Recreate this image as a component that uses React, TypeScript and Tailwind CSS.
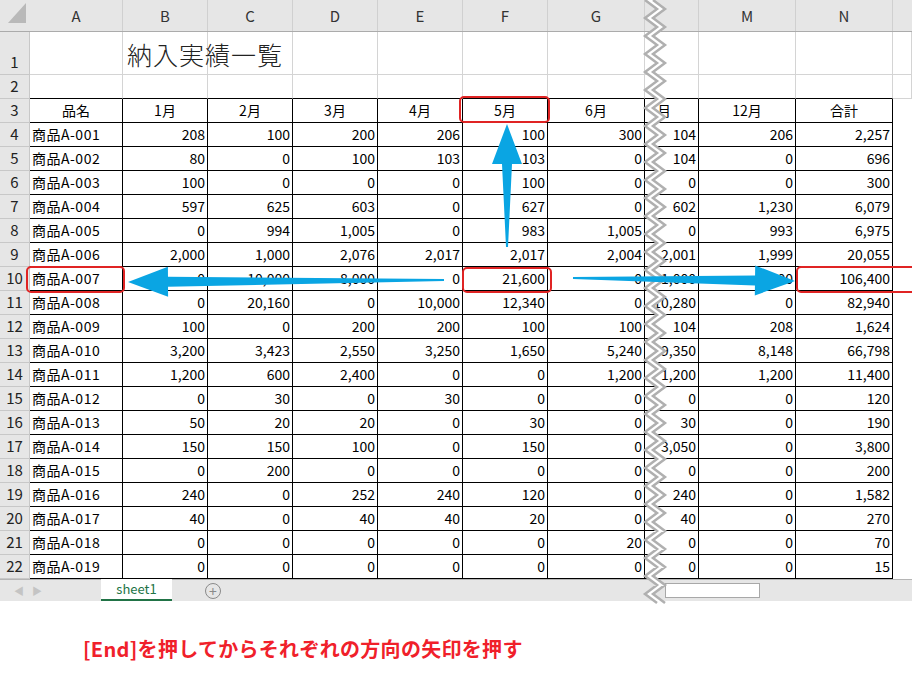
import React from "react";

const W = [30, 93, 85, 85, 85, 85, 85, 97, 54, 97, 97, 19];
const HEAD = ["", "A", "B", "C", "D", "E", "F", "G", "", "M", "N", ""];
const data: string[][] = [
  ["商品A-001","208","100","200","206","100","300","104","206","2,257"],
  ["商品A-002","80","0","100","103","103","0","104","0","696"],
  ["商品A-003","100","0","0","0","100","0","0","0","300"],
  ["商品A-004","597","625","603","0","627","0","602","1,230","6,079"],
  ["商品A-005","0","994","1,005","0","983","1,005","0","993","6,975"],
  ["商品A-006","2,000","1,000","2,076","2,017","2,017","2,004","2,001","1,999","20,055"],
  ["商品A-007","0","10,000","8,000","0","21,600","0","1,000","9,600","106,400"],
  ["商品A-008","0","20,160","0","10,000","12,340","0","10,280","0","82,940"],
  ["商品A-009","100","0","200","200","100","100","104","208","1,624"],
  ["商品A-010","3,200","3,423","2,550","3,250","1,650","5,240","9,350","8,148","66,798"],
  ["商品A-011","1,200","600","2,400","0","0","1,200","1,200","1,200","11,400"],
  ["商品A-012","0","30","0","30","0","0","0","0","120"],
  ["商品A-013","50","20","20","0","30","0","30","0","190"],
  ["商品A-014","150","150","100","0","150","0","3,050","0","3,800"],
  ["商品A-015","0","200","0","0","0","0","0","0","200"],
  ["商品A-016","240","0","252","240","120","0","240","0","1,582"],
  ["商品A-017","40","0","40","40","20","0","40","0","270"],
  ["商品A-018","0","0","0","0","0","20","0","0","70"],
  ["商品A-019","0","0","0","0","0","0","0","0","15"],
];
const font = { fontFamily: '"Noto Sans CJK JP", "Noto Sans", sans-serif' };

function Rh({ n, h }: { n: number; h: string }) {
  return (
    <div className={`w-[30px] shrink-0 bg-[#e6e6e6] border-r border-b border-[#c8c8c8] flex items-end justify-center pb-[1px] text-[15px] text-[#222] ${h}`}>{n}</div>
  );
}

function zig(x0: number) {
  const pts: string[] = [];
  for (let y = 0, i = 0; y <= 605; y += 9, i++) pts.push(`${x0 + (i % 2 ? 12 : 0)},${y}`);
  return pts.join(" ");
}

function Arrow({ x1, y1, x2, y2 }: { x1: number; y1: number; x2: number; y2: number }) {
  const dx = x2 - x1, dy = y2 - y1, L = Math.hypot(dx, dy);
  const ux = dx / L, uy = dy / L, px = -uy, py = ux;
  const hl = 40, hw = 15, sw0 = 1, sw1 = 5;
  const bx = x2 - ux * hl, by = y2 - uy * hl;
  const p = [
    [x1 + px * sw0, y1 + py * sw0], [bx + px * sw1, by + py * sw1], [bx + px * hw, by + py * hw],
    [x2, y2], [bx - px * hw, by - py * hw], [bx - px * sw1, by - py * sw1], [x1 - px * sw0, y1 - py * sw0],
  ].map((q) => q.join(",")).join(" ");
  return <polygon points={p} fill="#0aa5e3" />;
}

export default function App() {
  return (
    <div className="relative w-[912px] h-[675px] bg-white overflow-hidden text-[14px] text-black" style={font}>
      <div className="flex h-[32px] bg-[#e6e6e6] border-b border-[#ababab]">
        {W.map((w, i) => (
          <div key={i} style={{ width: w }} className={`shrink-0 flex items-end justify-center pb-[4px] text-[15px] text-[#333] ${i > 0 && i < 11 ? "border-r border-[#d0d0d0]" : ""}`}>
            {i === 0 ? (
              <svg width="30" height="32"><polygon points="26,8 26,28 8,28" fill="#b9b9b9" /></svg>
            ) : HEAD[i]}
          </div>
        ))}
      </div>
      <div className="flex h-[43px]">
        <Rh n={1} h="h-[43px]" />
        <div className="relative flex">
          {W.slice(1).map((w, i) => (
            <div key={i} style={{ width: w }} className="shrink-0 border-r border-b border-[#d4d4d4]" />
          ))}
          <div className="absolute left-[97px] top-[4px] text-[25px] font-light text-[#222] tracking-[1px] whitespace-nowrap">納入実績一覧</div>
        </div>
      </div>
      <div className="flex h-[24px]">
        <Rh n={2} h="h-[24px]" />
        {W.slice(1).map((w, i) => (
          <div key={i} style={{ width: w }} className={`shrink-0 border-r border-[#d4d4d4] ${i < 10 ? "border-b border-b-black" : "border-b"}`} />
        ))}
      </div>
      <div className="flex h-[24px]">
        <Rh n={3} h="h-[24px]" />
        {["品名","1月","2月","3月","4月","5月","6月","月","12月","合計"].map((t, i) => (
          <div key={i} style={{ width: W[i + 1] }} className={`shrink-0 h-[24px] border-r border-b border-black flex items-center ${i === 7 ? "justify-start pl-[12px]" : "justify-center"}`}>{t}</div>
        ))}
      </div>
      {data.map((r, ri) => (
        <div key={ri} className="flex h-[24px]">
          <Rh n={ri + 4} h="h-[24px]" />
          {r.map((t, i) => (
            <div key={i} style={{ width: W[i + 1] }} className={`shrink-0 h-[24px] border-r border-b border-black flex items-center overflow-hidden whitespace-nowrap ${i === 0 ? "pl-[2px] tracking-[0.5px]" : "justify-end pr-[2px]"}`}>{t}</div>
          ))}
        </div>
      ))}
      <div className="absolute left-0 top-[579px] w-[912px] h-[22px] bg-[#e6e6e6] border-t border-[#b5b5b5] flex items-center text-[13px]">
        <span className="ml-[14px] text-[#c4c4c4] text-[10px]">◀</span>
        <span className="ml-[8px] text-[#c4c4c4] text-[10px]">▶</span>
        <div className="ml-[59px] w-[71px] h-[22px] -mt-[1px] bg-white border-b-2 border-[#217346] text-[#217346] flex items-center justify-center">sheet1</div>
        <div className="ml-[33px] w-[16px] h-[16px] rounded-full border border-[#8a8a8a] text-[#8a8a8a] flex items-center justify-center text-[14px] leading-none">+</div>
        <div className="absolute left-[665px] top-[3px] w-[95px] h-[15px] bg-white border border-[#a8a8a8]" />
      </div>
      <svg className="absolute left-[640px] top-0" width="30" height="605">
        <polygon points={`${zig(5)} ${zig(13).split(" ").reverse().join(" ")}`} fill="white" />
        <polyline points={zig(5)} fill="none" stroke="#b0b0b0" strokeWidth="2.5" />
        <polyline points={zig(13)} fill="none" stroke="#b0b0b0" strokeWidth="2.5" />
      </svg>
      <svg className="absolute left-0 top-0" width="912" height="605">
        <Arrow x1={507} y1={247} x2={507} y2={124} />
        <Arrow x1={444} y1={280} x2={128} y2={282} />
        <Arrow x1={573} y1={278} x2={795} y2={281} />
      </svg>
      <div className="absolute left-[459px] top-[96px] w-[91px] h-[27px] border-2 border-[#e02424] rounded-[5px]" />
      <div className="absolute left-[26px] top-[266px] w-[99px] h-[27px] border-2 border-[#e02424] rounded-[5px]" />
      <div className="absolute left-[462px] top-[267px] w-[90px] h-[26px] border-2 border-[#e02424] rounded-[5px]" />
      <div className="absolute left-[796px] top-[266px] w-[120px] h-[27px] border-2 border-[#e02424] rounded-[5px]" />
      <div className="absolute left-[83px] top-[634px] text-[20px] font-bold text-[#f0202a] whitespace-nowrap tracking-[0.3px]">[End]を押してからそれぞれの方向の矢印を押す</div>
    </div>
  );
}
